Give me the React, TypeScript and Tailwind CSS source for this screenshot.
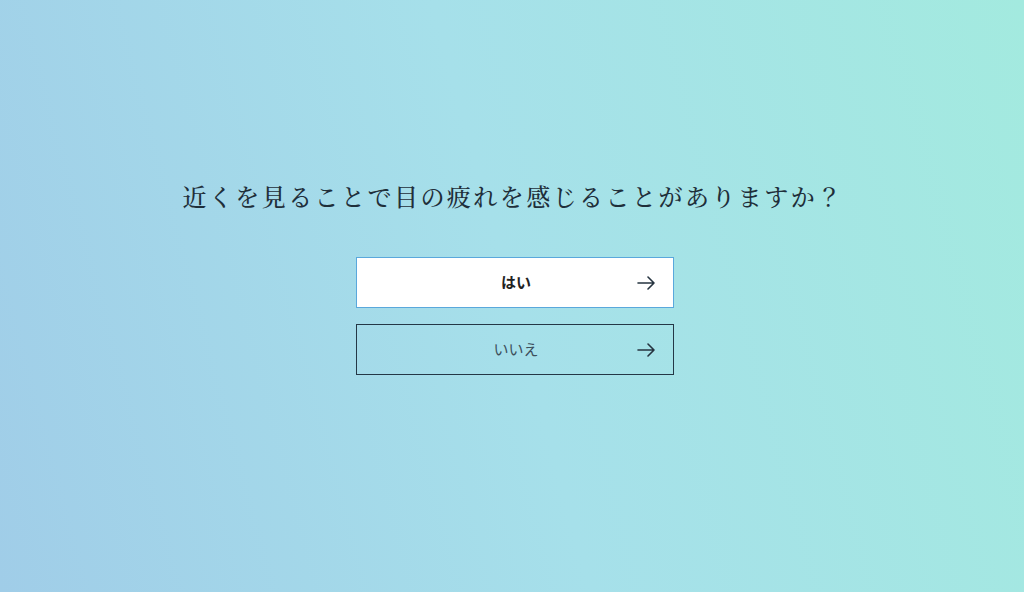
const Arrow = () => (
  <svg width="19" height="14" viewBox="0 0 19 14" fill="none" className="shrink-0">
    <path d="M1 7h16M11 1l6 6-6 6" stroke="#263440" strokeWidth="1.6" strokeLinecap="round" strokeLinejoin="round" />
  </svg>
);

const answers = [
  { label: "はい", primary: true },
  { label: "いいえ", primary: false },
];

export default function App() {
  return (
    <div className="w-[1024px] h-[592px] bg-[linear-gradient(75deg,#a0cde8_0%,#a6e0ea_50%,#a3eadf_100%)] flex flex-col items-center pt-[179px]">
      <h1
        className="text-[24px] leading-[34px] tracking-[2.45px] font-medium text-[#1f2f3a] pl-[2px]"
        style={{ fontFamily: '"Noto Serif CJK JP", "Liberation Serif", "Noto Sans CJK JP", serif' }}
      >
        近くを見ることで目の疲れを感じることがありますか？
      </h1>
      <div className="mt-[44px] ml-[5px] flex flex-col gap-[16px]">
        {answers.map((a) =>
          a.primary ? (
            <button
              key={a.label}
              className="w-[318px] h-[51px] bg-white border border-[#5aa8dc] flex items-center pl-[20px] pr-[17px] font-['Noto_Sans_CJK_JP',sans-serif]"
            >
              <span className="flex-1 text-center text-[15px] font-bold text-[#222] pl-[19px]">{a.label}</span>
              <Arrow />
            </button>
          ) : (
            <button
              key={a.label}
              className="w-[318px] h-[51px] border border-[#243746] flex items-center pl-[20px] pr-[17px] font-['Noto_Sans_CJK_JP',sans-serif]"
            >
              <span className="flex-1 text-center text-[15px] text-[#3d4f5c] pl-[19px]">{a.label}</span>
              <Arrow />
            </button>
          )
        )}
      </div>
    </div>
  );
}
